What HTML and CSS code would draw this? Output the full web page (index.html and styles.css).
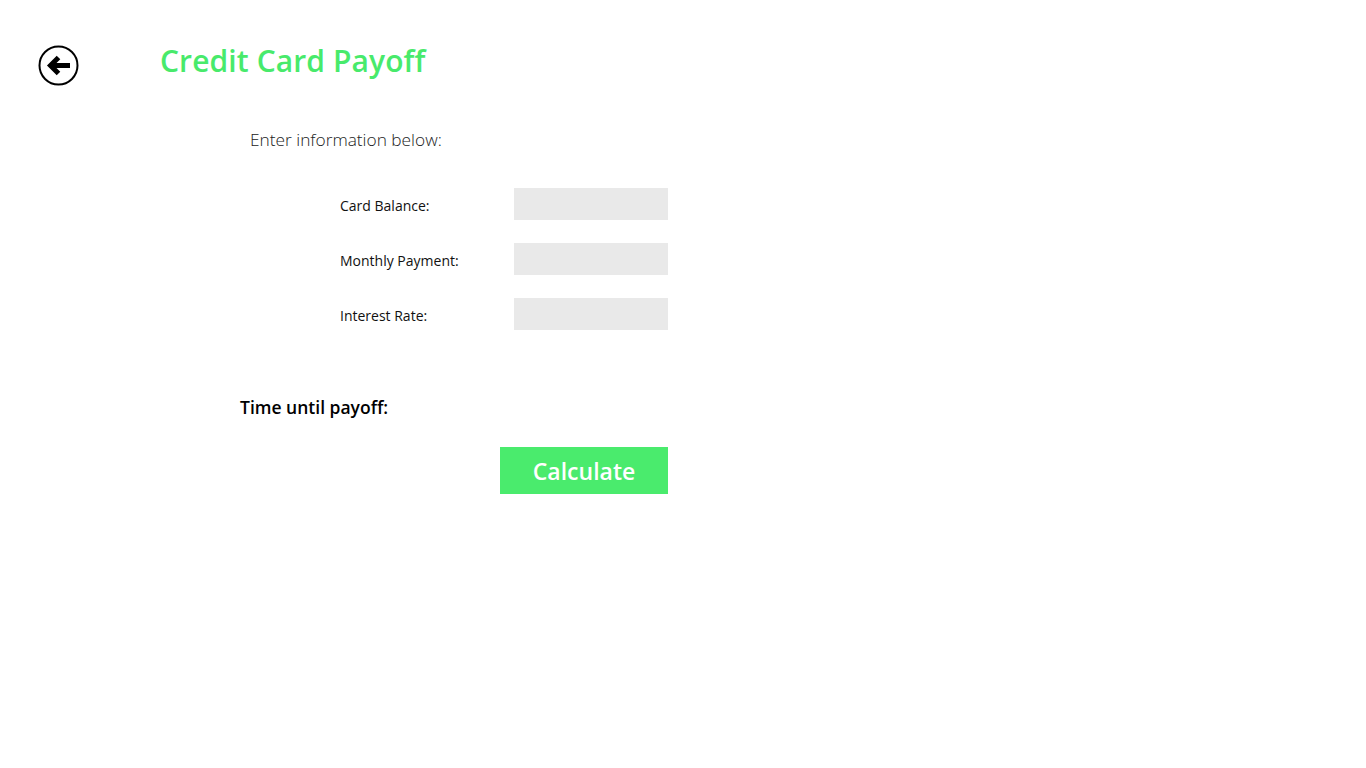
FILE: index.html
```html
<!DOCTYPE html>
<html>
<head>
<meta charset="utf-8">
<link rel="stylesheet" href="styles.css">
</head>
<body>
<header class="header">
  <button class="back" aria-label="Back">
    <svg width="42" height="42" viewBox="0 0 42 42">
      <circle cx="20.5" cy="21.5" r="19" fill="none" stroke="#000" stroke-width="2"/>
      <path d="M13 21.5 H32" fill="none" stroke="#000" stroke-width="5"/>
      <path d="M20.5 13.5 L12.5 21.5 L20.5 29.5" fill="none" stroke="#000" stroke-width="5" stroke-linejoin="miter"/>
    </svg>
  </button>
  <h1 class="title">Credit Card Payoff</h1>
</header>
<main class="content">
  <p class="intro">Enter information below:</p>
  <div class="form">
    <label class="label">Card Balance:</label><input class="field" type="text">
    <label class="label">Monthly Payment:</label><input class="field" type="text">
    <label class="label">Interest Rate:</label><input class="field" type="text">
  </div>
  <p class="result">Time until payoff:</p>
  <div class="actions">
    <button class="calc">Calculate</button>
  </div>
</main>
</body>
</html>
```
FILE: styles.css
```css
html, body {
  margin: 0;
  padding: 0;
  background: #fff;
  font-family: "Open Sans", "Noto Sans", sans-serif;
  color: #000;
}
.header {
  display: flex;
  align-items: flex-start;
  padding: 44px 0 0 38px;
  height: 80px;
}
.back {
  width: 42px;
  height: 42px;
  padding: 0;
  border: 0;
  background: none;
  display: flex;
}
.title {
  margin: 0 0 0 80px;
  font-size: 30px;
  font-weight: 600;
  color: #48ea6b;
  line-height: 36px;
  margin-top: -1px;
  letter-spacing: 0.1px;
}
.content {
  padding-left: 240px;
}
.intro {
  margin: 0 0 0 10px;
  font-size: 17.3px;
  font-weight: 300;
  color: #222;
  line-height: 24px;
  padding-top: 4px;
}
.form {
  display: grid;
  grid-template-columns: 174px 154px;
  row-gap: 23px;
  margin: 36px 0 0 100px;
  align-items: center;
}
.label {
  font-size: 14px;
  color: #111;
  line-height: 20px;
  padding-top: 3px;
}
.field {
  width: 154px;
  height: 32px;
  box-sizing: border-box;
  border: 0;
  background: #e9e9e9;
  margin: 0;
}
.result {
  margin: 66px 0 0 0;
  font-size: 17.5px;
  font-weight: 600;
  line-height: 22px;
}
.actions {
  display: flex;
  margin: 29px 0 0 260px;
}
.calc {
  width: 168px;
  height: 47px;
  border: 0;
  background: #4aeb6d;
  color: #fff;
  font-family: inherit;
  font-size: 23px;
  font-weight: 600;
  padding: 0;
}
```
